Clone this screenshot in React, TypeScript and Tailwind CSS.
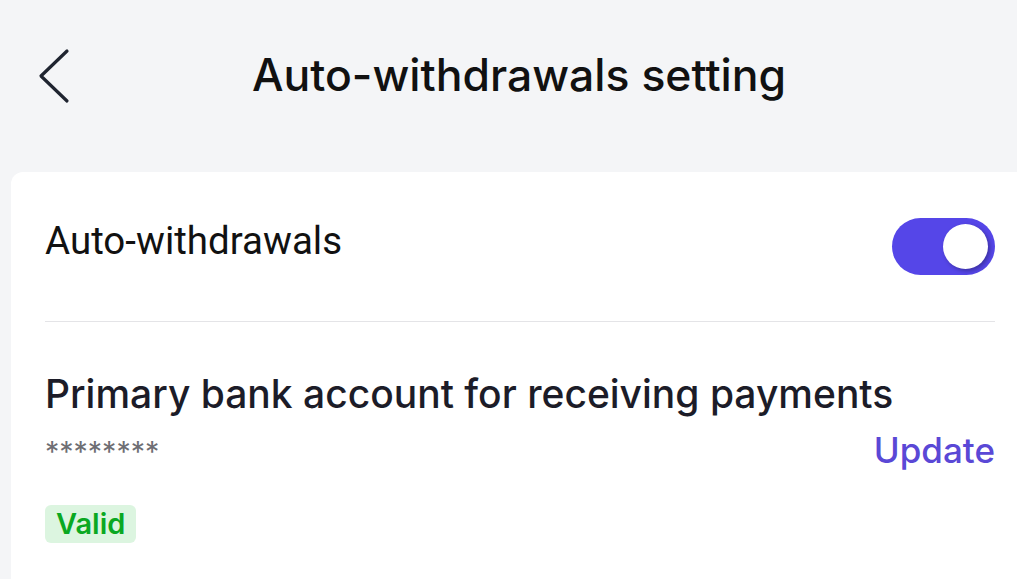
export default function App() {
  return (
    <div className="w-[1017px] h-[579px] overflow-hidden bg-[#f4f5f7] font-['Inter',sans-serif]">
      <header className="grid grid-cols-[1fr_auto_1fr] items-start h-[172px] pl-[38px] pr-[17px]">
        <button className="mt-[48px] w-[32px] h-[56px] justify-self-start">
          <svg viewBox="0 0 32 56" className="w-[32px] h-[56px]" fill="none">
            <path d="M29 3 L3 28 L29 53" stroke="#1f2430" strokeWidth="3.2" strokeLinecap="round" strokeLinejoin="round" />
          </svg>
        </button>
        <h1 className="mt-[53px] text-[44.5px] leading-none font-medium text-[#111]">Auto-withdrawals setting</h1>
        <div />
      </header>

      <section className="ml-[11px] h-[407px] rounded-tl-[12px] bg-white pl-[34px] pr-[22px]">
        <div className="flex items-center justify-between h-[150px] border-b border-[#e4e4e7]">
          <span className="mb-[12px] font-['Roboto',sans-serif] text-[38.5px] text-[#111]">Auto-withdrawals</span>
          <div className="relative w-[103px] h-[57px] rounded-full bg-[#5546e8]">
            <div className="absolute right-[7px] top-[6px] w-[45px] h-[45px] rounded-full bg-white shadow-[2px_2px_4px_rgba(0,0,0,0.3)]" />
          </div>
        </div>

        <div className="pt-[52px]">
          <p className="text-[39px] leading-none font-medium text-[#1c1c28]">Primary bank account for receiving payments</p>
          <div className="flex items-start justify-between mt-[20px]">
            <span className="mt-[5px] text-[28.5px] leading-none text-[#6e6e73]">********</span>
            <button className="text-[35px] leading-none font-medium text-[#5a48d6]">Update</button>
          </div>
          <span className="inline-block mt-[37px] h-[38px] rounded-[6px] bg-[#dcf5e0] px-[11px] leading-[38px] text-[29px] font-semibold text-[#0aa822]">
            Valid
          </span>
        </div>
      </section>
    </div>
  );
}
